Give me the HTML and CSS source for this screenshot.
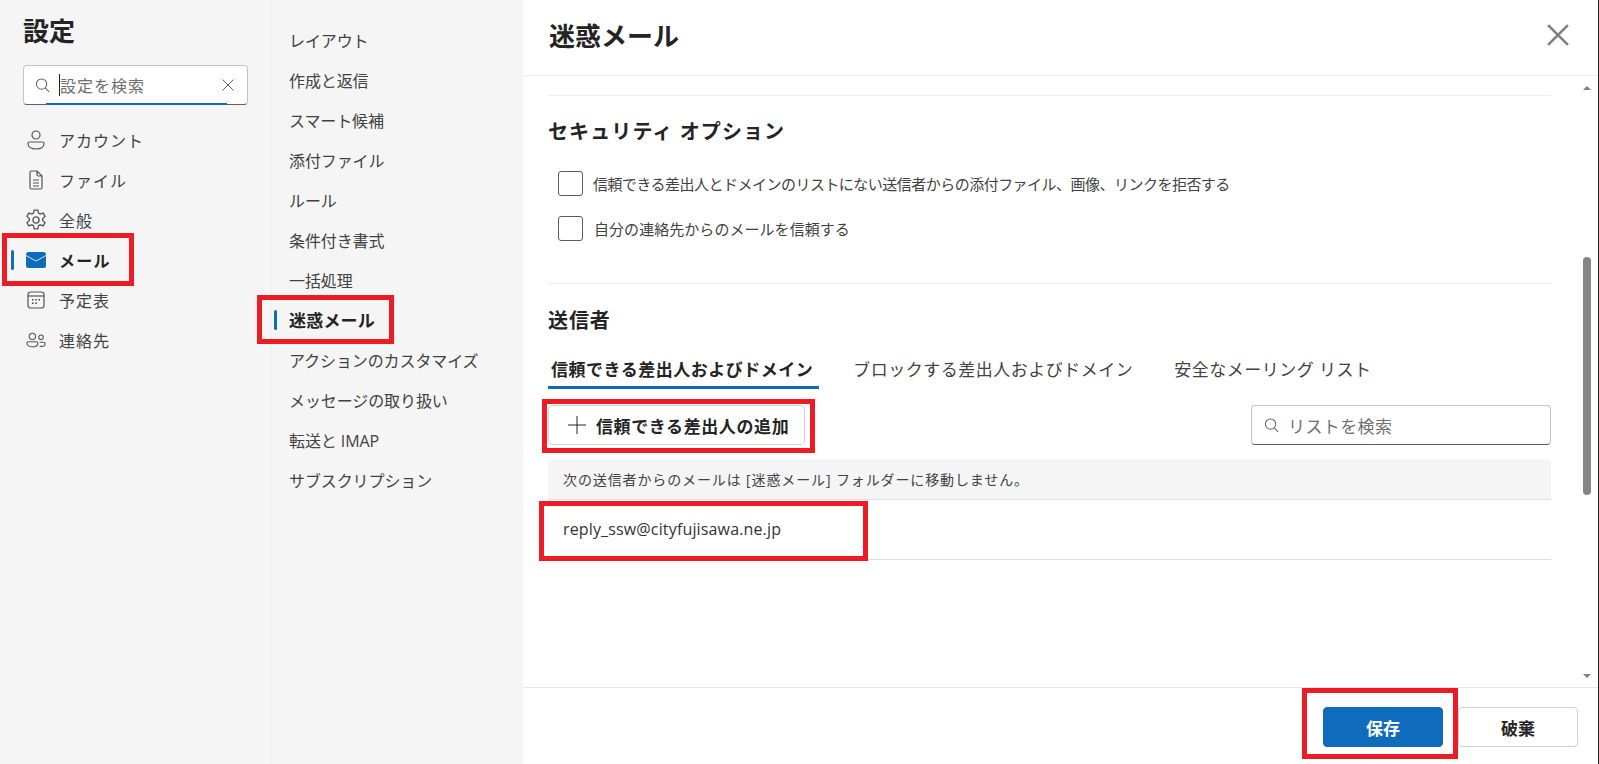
FILE: index.html
```html
<!DOCTYPE html>
<html lang="ja">
<head>
<meta charset="utf-8">
<title>設定</title>
<link rel="stylesheet" href="styles.css">
</head>
<body>
<div class="app">
  <aside class="side">
    <h1 class="side-title">設定</h1>
    <div class="side-search">
      <svg class="ic-search" viewBox="0 0 16 16"><circle cx="7" cy="6.500" r="5.500"/><path d="M11 10.600 15 14.800"/></svg>
      <span class="caret"></span>
      <span class="side-search-text">設定を検索</span>
      <svg class="ic-x" viewBox="0 0 12 12"><path d="M.5.5 11.500 11.500M11.500.5.5 11.500"/></svg>
      <span class="focus-line"></span>
    </div>
    <nav class="side-nav">
      <a class="side-item"><svg class="ic" viewBox="0 0 20 20"><circle cx="10" cy="5" r="4"/><path d="M3.500 12h13a1.500 1.500 0 0 1 1.500 1.500c0 3.200-3 5.500-8 5.500s-8-2.300-8-5.500A1.500 1.500 0 0 1 3.500 12z"/></svg>アカウント</a>
      <a class="side-item"><svg class="ic" viewBox="0 0 20 20"><path d="M5 1h6l5 5v11.500a1.500 1.500 0 0 1-1.500 1.500h-9A1.500 1.500 0 0 1 4 17.500v-15A1.500 1.500 0 0 1 5.500 1zM11 1v3.500A1.500 1.500 0 0 0 12.500 6H16M7 10h6M7 13h6M7 16h6"/></svg>ファイル</a>
      <a class="side-item"><svg class="ic gear" viewBox="0 0 20 20"><circle cx="10" cy="10" r="2.800"/><path d="M8.300 1h3.400l.6 2.800 1.500.8 2.700-.9 1.700 3-2.100 1.900v1.800l2.100 1.900-1.700 3-2.700-.9-1.500.8-.6 2.800H8.300l-.6-2.800-1.500-.8-2.700.9-1.700-3 2.100-1.900V8.600L1.800 6.700l1.700-3 2.700.9 1.500-.8z"/></svg>全般</a>
      <a class="side-item active"><span class="marker"></span><svg class="ic mail" viewBox="0 0 20 16"><rect width="20" height="16" rx="2.500"/><path d="M0 3.500 10 9l10-5.500"/></svg>メール</a>
      <a class="side-item"><svg class="ic" viewBox="0 0 20 20"><rect x="2" y="2" width="16" height="16" rx="2.500"/><path d="M2 6h16"/><path class="dots" d="M6 9h1.500v1.500H6zM9.300 9h1.500v1.500H9.300zM12.500 9H14v1.500h-1.500zM6 12.500h1.500V14H6zM9.300 12.500h1.500V14H9.300z"/></svg>予定表</a>
      <a class="side-item"><svg class="ic" viewBox="0 0 22 20"><circle cx="7" cy="6" r="3.500"/><circle cx="16.500" cy="7" r="2.500"/><path d="M2.500 12h9a1.500 1.500 0 0 1 1.500 1.500c0 2.500-2.500 4-6 4s-6-1.500-6-4A1.500 1.500 0 0 1 2.500 12zM15 12.500h4.500a1.500 1.500 0 0 1 1.500 1.500c0 1.800-2 3-4.500 3-.5 0-1 0-1.500-.1"/></svg>連絡先</a>
    </nav>
  </aside>
  <aside class="sub">
    <a class="sub-item">レイアウト</a>
    <a class="sub-item">作成と返信</a>
    <a class="sub-item">スマート候補</a>
    <a class="sub-item">添付ファイル</a>
    <a class="sub-item">ルール</a>
    <a class="sub-item">条件付き書式</a>
    <a class="sub-item">一括処理</a>
    <a class="sub-item active"><span class="marker"></span>迷惑メール</a>
    <a class="sub-item">アクションのカスタマイズ</a>
    <a class="sub-item">メッセージの取り扱い</a>
    <a class="sub-item">転送と IMAP</a>
    <a class="sub-item">サブスクリプション</a>
  </aside>
  <main class="main">
    <header class="main-head">
      <h2 class="main-title">迷惑メール</h2>
      <svg class="ic-close" viewBox="0 0 20 20"><path d="M1 1 19 19M19 1 1 19"/></svg>
    </header>
    <div class="body">
      <div class="content">
        <hr class="rule first">
        <h3 class="sec-title sec-a">セキュリティ オプション</h3>
        <label class="check"><span class="box"></span>信頼できる差出人とドメインのリストにない送信者からの添付ファイル、画像、リンクを拒否する</label>
        <label class="check loose"><span class="box"></span>自分の連絡先からのメールを信頼する</label>
        <hr class="rule second">
        <h3 class="sec-title sec-b">送信者</h3>
        <div class="tabs">
          <span class="tab on">信頼できる差出人およびドメイン</span>
          <span class="tab">ブロックする差出人およびドメイン</span>
          <span class="tab">安全なメーリング リスト</span>
        </div>
        <div class="tools">
          <button class="add"><svg class="ic-plus" viewBox="0 0 18 18"><path d="M9 0v18M0 9h18"/></svg>信頼できる差出人の追加</button>
          <div class="list-search"><svg class="ic-search" viewBox="0 0 16 16"><circle cx="7" cy="6.500" r="5.500"/><path d="M11 10.600 15 14.800"/></svg>リストを検索</div>
        </div>
        <div class="banner">次の送信者からのメールは [迷惑メール] フォルダーに移動しません。</div>
        <div class="row">reply_ssw@cityfujisawa.ne.jp</div>
      </div>
      <div class="scroll">
        <span class="arrow up"></span>
        <span class="thumb"></span>
        <span class="arrow down"></span>
      </div>
    </div>
    <footer class="foot">
      <button class="btn primary">保存</button>
      <button class="btn">破棄</button>
    </footer>
  </main>
  <span class="edge"></span>
</div>
<div class="mark m1"></div>
<div class="mark m2"></div>
<div class="mark m3"></div>
<div class="mark m4"></div>
<div class="mark m5"></div>
</body>
</html>
```
FILE: styles.css
```css
* { box-sizing: border-box; }
html, body { margin: 0; height: 100%; overflow: hidden; background: #fff; }
body {
  font-family: "Open Sans", "Noto Sans CJK JP", sans-serif;
  color: #424242;
  font-size: 16px;
}
h1, h2, h3 { margin: 0; }
.app { display: flex; height: 764px; width: 1599px; }

.side { width: 272px; flex: none; background: #f5f5f5; border-right: 1px solid #efefef; padding: 0 0 0 23px; }
.side-title { font-size: 26px; line-height: 32px; padding-top: 15px; color: #242424; font-weight: 700; }
.side-search {
  position: relative; display: flex; align-items: center; width: 225px; height: 40px; margin-top: 18px;
  background: #fff; border: 1px solid #c4c4c4; border-bottom-color: #616161; border-radius: 4px; padding: 0 13px 0 11px;
}
.ic-search { width: 15px; height: 15px; flex: none; fill: none; stroke: #616161; stroke-width: 1.1; }
.caret { width: 1px; height: 22px; background: #242424; margin-left: 9px; flex: none; }
.side-search-text { flex: 1; color: #707070; font-size: 16px; letter-spacing: 1px; }
.ic-x { width: 12px; height: 12px; flex: none; fill: none; stroke: #616161; stroke-width: 1; }
.focus-line { position: absolute; left: 22px; right: 20px; bottom: -1px; height: 2px; background: #0f6cbd; }
.side-nav { margin-top: 15px; margin-left: -23px; }
.side-item {
  position: relative; display: flex; align-items: center; height: 40px; padding-left: 26px; letter-spacing: 1px;
}
.ic { width: 20px; height: 20px; flex: none; margin-right: 13px; fill: none; stroke: #555; stroke-width: 1.2; }
.gear { width: 22px; height: 22px; margin-left: -1px; margin-right: 12px; }
.dots { fill: #424242; stroke: none; }
.side-item.active { font-weight: 700; color: #242424; letter-spacing: 1.2px; }
.mail { fill: #0f6cbd; stroke: none; height: 16px; }
.mail path { fill: none; stroke: #cfe4f6; stroke-width: 1; }
.marker { position: absolute; left: 11px; top: 10px; width: 3px; height: 20px; border-radius: 2px; background: #0f6cbd; }

.sub { width: 251px; flex: none; background: #f5f5f5; padding-top: 20px; }
.sub-item { position: relative; display: flex; align-items: center; height: 40px; padding-left: 17px; letter-spacing: -.1px; }
.sub-item.active { font-weight: 700; font-size: 17px; color: #242424; letter-spacing: .2px; padding-bottom: 2px; }
.sub-item .marker { left: 2px; }

.main { flex: 1; display: flex; flex-direction: column; min-width: 0; }
.main-head { height: 76px; flex: none; display: flex; align-items: center; justify-content: space-between; padding: 0 30px 5px 26px; border-bottom: 1px solid #eeeeee; }
.main-title { font-size: 26px; font-weight: 700; color: #242424; }
.ic-close { width: 22px; height: 22px; fill: none; stroke: #808080; stroke-width: 2.400; }
.body { flex: 1; display: flex; min-height: 0; }
.content { width: 1054px; flex: none; padding: 19px 0 0 25px; overflow: hidden; }
.rule { height: 1px; border: 0; background: #eeeeee; margin: 0; width: 1003px; }
.sec-title { font-size: 20px; line-height: 28px; font-weight: 700; color: #242424; }
.sec-a { margin-top: 22px; letter-spacing: 1.100px; }
.check { display: flex; align-items: center; height: 25px; font-size: 15px; letter-spacing: -.52px; margin: 0 0 20px 10px; }
.sec-a + .check { margin-top: 25px; }
.check.loose { letter-spacing: .05px; }
.check.loose .box { margin-right: 11px; }
.box { width: 25px; height: 25px; flex: none; border: 1px solid #5c5c5c; border-radius: 3px; margin-right: 10px; }
.rule.second { margin-top: 42px; }
.sec-b { margin-top: 23px; letter-spacing: .9px; }
.tabs { display: flex; gap: 35px; margin-top: 17px; height: 39px; }
.tab { padding: 0 3px; height: 37px; line-height: 36px; font-size: 17px; letter-spacing: .5px; white-space: nowrap; }
.tab.on { font-weight: 700; color: #242424; border-bottom: 3px solid #0f6cbd; padding-right: 6px; margin-right: -4px; }
.tools { display: flex; justify-content: space-between; align-items: flex-start; margin-top: 14px; height: 54px; width: 1003px; }
.add {
  display: flex; align-items: center; width: 257px; height: 40px; padding: 0 0 0 19px; background: #fff;
  border: 1px solid #d1d1d1; border-radius: 4px; font: 700 17px "Open Sans", "Noto Sans CJK JP", sans-serif; letter-spacing: .6px; color: #242424;
}
.ic-plus { width: 18px; height: 18px; margin-right: 10px; fill: none; stroke: #242424; stroke-width: 1; }
.list-search {
  display: flex; align-items: center; gap: 9px; width: 300px; height: 40px; padding-left: 12px; color: #707070; font-size: 17px; letter-spacing: .4px;
  border: 1px solid #c4c4c4; border-bottom-color: #616161; border-radius: 4px;
}
.banner { height: 41px; display: flex; align-items: center; padding-left: 15px; font-size: 14px; background: #f5f5f5; border-radius: 4px 4px 0 0; border-bottom: 1px solid #e0e0e0; width: 1003px; letter-spacing: .88px; }
.row { height: 60px; display: flex; align-items: center; padding-left: 15px; font-size: 16px; letter-spacing: .15px; border-bottom: 1px solid #e0e0e0; width: 1003px; color: #333; padding-bottom: 1px; }

.scroll { width: 20px; flex: none; display: flex; flex-direction: column; align-items: center; padding: 10px 0 9px; }
.arrow { width: 0; height: 0; border-left: 4px solid transparent; border-right: 4px solid transparent; flex: none; }
.arrow.up { border-bottom: 4px solid #808080; }
.arrow.down { border-top: 4px solid #808080; }
.thumb { width: 8px; height: 238px; margin-top: 167px; margin-bottom: auto; background: #858585; border-radius: 4px; }

.foot { height: 77px; flex: none; display: flex; justify-content: flex-end; align-items: flex-start; gap: 15px; padding: 19px 21px 0 0; border-top: 1px solid #e6e6e6; }
.btn { width: 120px; height: 40px; background: #fff; border: 1px solid #d1d1d1; border-radius: 4px; font: 700 17px "Open Sans", "Noto Sans CJK JP", sans-serif; color: #242424; }
.btn.primary { background: #0f6cbd; border-color: #0f6cbd; color: #fff; }

.edge { position: absolute; top: 0; right: 0; width: 1px; height: 764px; background: #222; }
.mark { position: absolute; border: 5px solid #ed1c24; }
.m1 { left: 2px; top: 233px; width: 132px; height: 53px; }
.m2 { left: 257px; top: 295px; width: 137px; height: 49px; }
.m3 { left: 542px; top: 399px; width: 273px; height: 54px; }
.m4 { left: 539px; top: 501px; width: 329px; height: 60px; }
.m5 { left: 1302px; top: 688px; width: 156px; height: 71px; }
```
